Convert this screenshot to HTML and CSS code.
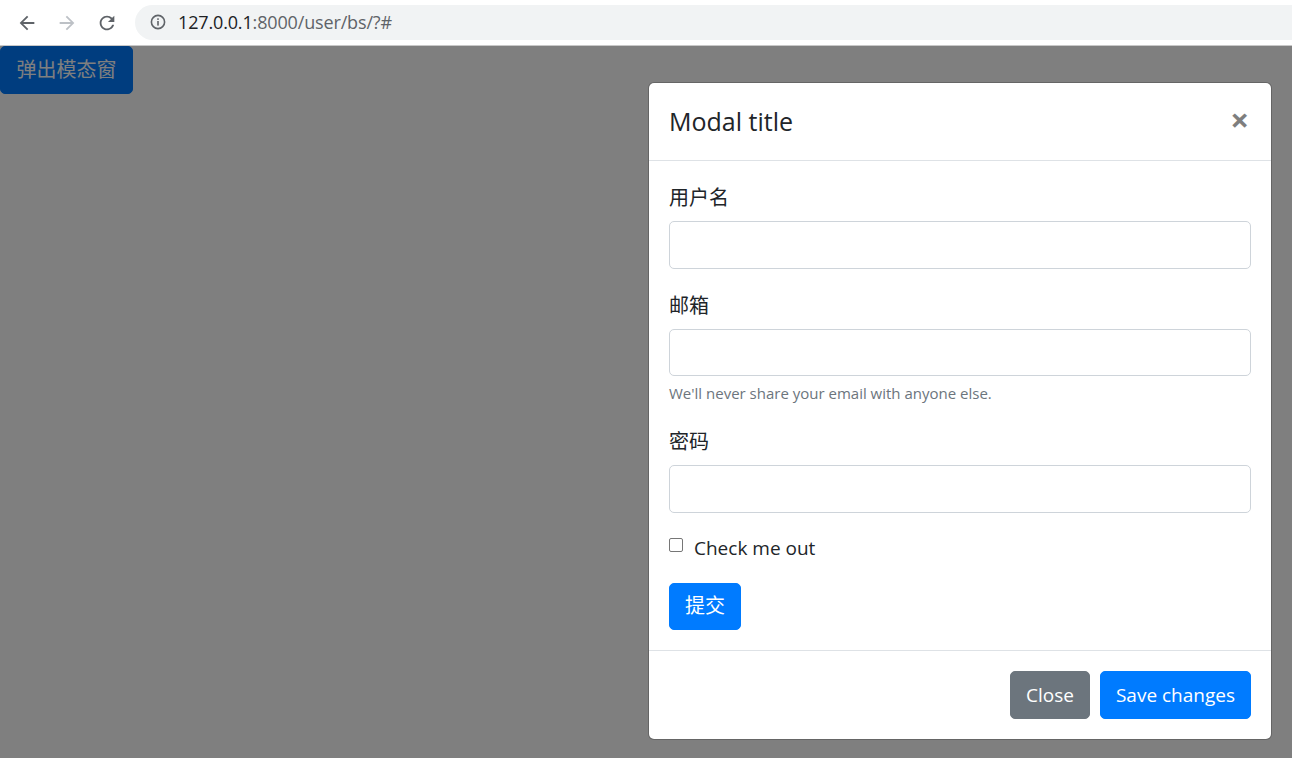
FILE: index.html
```html
<!DOCTYPE html>
<html lang="zh-CN">
<head>
<meta charset="utf-8">
<title>bs</title>
<link rel="stylesheet" href="styles.css">
</head>
<body>
<div class="toolbar">
  <div class="nav-icons">
    <svg class="nav-icon" viewBox="0 0 24 24" width="22" height="22"><path d="M20 11H7.83l5.59-5.59L12 4l-8 8 8 8 1.41-1.41L7.83 13H20v-2z" fill="#5f6368"/></svg>
    <svg class="nav-icon" viewBox="0 0 24 24" width="22" height="22"><path d="M12 4l-1.41 1.41L16.17 11H4v2h12.17l-5.58 5.59L12 20l8-8z" fill="#bdc1c6"/></svg>
    <svg class="nav-icon" viewBox="0 0 24 24" width="22" height="22"><path d="M17.65 6.35A7.958 7.958 0 0 0 12 4c-4.420 0-7.990 3.580-7.990 8s3.570 8 7.990 8c3.730 0 6.840-2.550 7.730-6h-2.080A5.990 5.990 0 0 1 12 18c-3.310 0-6-2.690-6-6s2.690-6 6-6c1.660 0 3.140.690 4.220 1.780L13 11h7V4l-2.350 2.350z" fill="#5f6368"/></svg>
  </div>
  <div class="omnibox">
    <svg class="info-icon" viewBox="0 0 16 16" width="16" height="16"><circle cx="8" cy="8" r="6.6" fill="none" stroke="#5f6368" stroke-width="1.6"/><rect x="7.2" y="7" width="1.6" height="4.6" fill="#5f6368"/><rect x="7.2" y="4.3" width="1.6" height="1.6" fill="#5f6368"/></svg>
    <span class="url"><span class="host">127.0.0.1</span><span class="rest">:8000/user/bs/?#</span></span>
  </div>
</div>
<div class="page">
  <button class="btn btn-primary btn-open">弹出模态窗</button>
  <div class="backdrop"></div>
  <div class="modal">
    <div class="modal-header">
      <h5 class="modal-title">Modal title</h5>
      <span class="close">&times;</span>
    </div>
    <div class="modal-body">
      <div class="form-group">
        <label class="label">用户名</label>
        <div class="input"></div>
      </div>
      <div class="form-group">
        <label class="label">邮箱</label>
        <div class="input"></div>
        <small class="help">We'll never share your email with anyone else.</small>
      </div>
      <div class="form-group">
        <label class="label">密码</label>
        <div class="input"></div>
      </div>
      <div class="form-check">
        <span class="check-box"></span>
        <span class="check-label">Check me out</span>
      </div>
      <button class="btn btn-primary btn-cjk">提交</button>
    </div>
    <div class="modal-footer">
      <button class="btn btn-secondary">Close</button>
      <button class="btn btn-primary">Save changes</button>
    </div>
  </div>
</div>
</body>
</html>
```
FILE: styles.css
```css
* { box-sizing: border-box; }
html, body { margin: 0; padding: 0; }
body {
  width: 1292px;
  height: 758px;
  overflow: hidden;
  font-family: "Open Sans", "Noto Sans CJK SC", sans-serif;
  font-size: 20px;
  line-height: 30px;
  color: #212529;
  background: #fff;
}
.toolbar {
  height: 46px;
  display: flex;
  align-items: center;
  background: #fff;
  border-bottom: 1px solid #c8c8c8;
}
.nav-icons {
  display: flex;
  align-items: center;
  gap: 18px;
  padding-left: 16px;
  width: 135px;
}
.nav-icon { display: block; }
.omnibox {
  flex: 1;
  height: 35px;
  margin-bottom: 1px;
  background: #f1f3f4;
  border-radius: 18px 0 0 18px;
  display: flex;
  align-items: center;
  padding-left: 15px;
}
.info-icon { display: block; margin-right: 12px; }
.url {
  font-family: "Open Sans", sans-serif;
  font-size: 18px;
  letter-spacing: -0.15px;
  line-height: 24px;
}
.host { color: #202124; }
.rest { color: #5f6368; }

.page {
  position: relative;
  height: 712px;
  background: #fff;
}
.backdrop {
  position: absolute;
  inset: 0;
  background: rgba(0, 0, 0, 0.5);
}
.btn {
  display: inline-block;
  font-family: "Open Sans", "Noto Sans CJK SC", sans-serif;
  font-size: 19px;
  line-height: 30px;
  height: 47.5px;
  padding: 7.5px 15px;
  border: 1px solid transparent;
  border-radius: 5px;
  color: #fff;
  cursor: pointer;
}
.btn-cjk { font-size: 20px; }
.btn-primary { background: #007bff; border-color: #007bff; }
.btn-secondary { background: #6c757d; border-color: #6c757d; }
.btn-open { display: block; height: 48px; width: 133px; font-size: 20px; padding: 7.5px 15px; }

.modal {
  position: absolute;
  left: 648px;
  top: 36px;
  width: 624px;
  background: #fff;
  border: 1px solid rgba(0, 0, 0, 0.2);
  border-radius: 6px;
  background-clip: padding-box;
}
.modal-header {
  display: flex;
  justify-content: space-between;
  align-items: flex-start;
  padding: 20px;
  height: 78px;
  border-bottom: 1px solid #dee2e6;
}
.modal-title {
  margin: 0;
  font-size: 25px;
  font-weight: 500;
  line-height: 37.5px;
}
.close {
  font-size: 33px;
  font-weight: 700;
  line-height: 30px;
  color: #000;
  opacity: 0.5;
  margin-top: 2px;
  margin-right: 2px;
}
.modal-body { padding: 20px; }
.form-group { margin-bottom: 20px; }
.label {
  display: block;
  height: 30px;
  padding-top: 2px;
  margin-bottom: 10px;
  font-size: 20px;
}
.input {
  height: 47.5px;
  border: 1px solid #ced4da;
  border-radius: 5px;
  background: #fff;
}
.help {
  display: block;
  margin-top: 5px;
  font-size: 15px;
  line-height: 24px;
  color: #6c757d;
}
.form-check {
  display: flex;
  align-items: center;
  height: 30px;
  margin-bottom: 20px;
  font-size: 19px;
}
.check-box {
  width: 14px;
  height: 14px;
  border: 1px solid #767676;
  border-radius: 2px;
  margin-right: 11px;
  margin-top: -6px;
  background: #fff;
}
.modal-footer {
  display: flex;
  justify-content: flex-end;
  gap: 10px;
  padding: 20px;
  border-top: 1px solid #dee2e6;
}
```
